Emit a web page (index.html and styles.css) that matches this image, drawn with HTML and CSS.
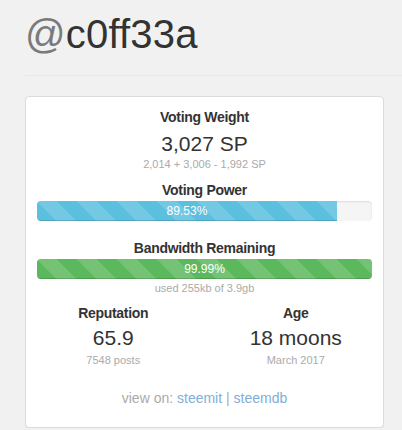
FILE: index.html
```html
<!DOCTYPE html>
<html>
<head>
<meta charset="utf-8">
<link rel="stylesheet" href="styles.css">
</head>
<body>
<div class="page">
  <h1 class="title"><span class="at">@</span>c0ff33a</h1>
  <hr class="rule">
  <div class="panel">
    <div class="label">Voting Weight</div>
    <div class="big">3,027 SP</div>
    <div class="small">2,014 + 3,006 - 1,992 SP</div>

    <div class="label label-vp">Voting Power</div>
    <div class="progress">
      <div class="bar bar-info" style="width: 89.53%">89.53%</div>
    </div>

    <div class="label label-bw">Bandwidth Remaining</div>
    <div class="progress">
      <div class="bar bar-success" style="width: 99.99%">99.99%</div>
    </div>
    <div class="small small-bw">used 255kb of 3.9gb</div>

    <div class="stats">
      <div class="stat">
        <div class="label">Reputation</div>
        <div class="big">65.9</div>
        <div class="small">7548 posts</div>
      </div>
      <div class="stat">
        <div class="label">Age</div>
        <div class="big">18 moons</div>
        <div class="small">March 2017</div>
      </div>
    </div>

    <div class="links">view on: <a href="#">steemit</a> | <a href="#">steemdb</a></div>
  </div>
</div>
</body>
</html>
```

FILE: styles.css
```css
html, body {
  margin: 0;
  padding: 0;
  background: #f1f1f1;
}
body {
  font-family: "Liberation Sans", Helvetica, Arial, sans-serif;
  color: #333;
}
.page {
  padding-left: 25px;
}
.title {
  margin: 12px 0 0;
  font-size: 40px;
  line-height: 44px;
  font-weight: normal;
  color: #333;
  letter-spacing: 0.2px;
}
.at {
  color: #7a7a7a;
}
.rule {
  margin: 19px 0 0;
  border: 0;
  border-top: 1px solid #e8e8e8;
  height: 0;
}
.panel {
  margin-top: 20px;
  width: 335px;
  background: #fff;
  border: 1px solid #dcdcdc;
  border-radius: 4px;
  box-shadow: 0 1px 1px rgba(0,0,0,0.05);
  padding: 10px 11px 19px;
  text-align: center;
}
.label {
  font-size: 14px;
  line-height: 20px;
  font-weight: bold;
  letter-spacing: -0.3px;
  color: #333;
}
.big {
  margin-top: 4px;
  font-size: 21px;
  line-height: 26px;
  color: #333;
}
.small {
  font-size: 11px;
  line-height: 14px;
  color: #aaa;
}
.label-vp {
  margin-top: 9px;
}
.label-bw {
  margin-top: 17px;
}
.progress {
  margin-top: 1px;
  height: 20px;
  background: #f5f5f5;
  border-radius: 4px;
  overflow: hidden;
  box-shadow: inset 0 1px 2px rgba(0,0,0,0.1);
  display: flex;
}
.bar {
  height: 20px;
  line-height: 20px;
  font-size: 12px;
  color: #fff;
  text-align: center;
  box-shadow: inset 0 -1px 0 rgba(0,0,0,0.15);
  background-image: linear-gradient(45deg, rgba(255,255,255,0.15) 25%, transparent 25%, transparent 50%, rgba(255,255,255,0.15) 50%, rgba(255,255,255,0.15) 75%, transparent 75%, transparent);
  background-size: 40px 40px;
}
.bar-info {
  background-color: #5bc0de;
}
.bar-success {
  background-color: #5cb85c;
}
.small-bw {
  margin-top: 2px;
}
.stats {
  display: grid;
  grid-template-columns: 1fr 1fr;
  margin: 8px -15px 0;
}
.stats .big {
  margin-top: 2px;
}
.stats .small {
  margin-top: 2px;
}
.links {
  margin-top: 21px;
  font-size: 14px;
  line-height: 20px;
  color: #aaa;
}
.links a {
  color: #82aed6;
  text-decoration: none;
}
```
